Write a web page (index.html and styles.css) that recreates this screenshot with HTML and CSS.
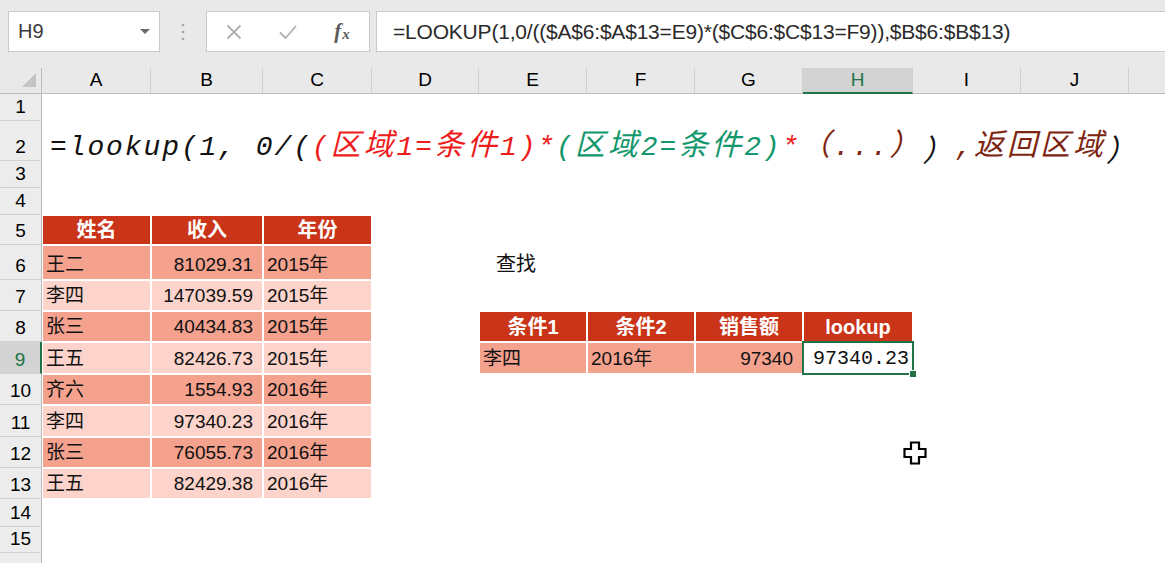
FILE: index.html
```html
<!DOCTYPE html>
<html lang="zh-CN">
<head>
<meta charset="utf-8">
<title>LOOKUP 多条件查找</title>
<link rel="stylesheet" href="styles.css">
</head>
<body>
<div class="toolbar">
  <div class="namebox">
    <span class="ref">H9</span>
    <svg class="dd" width="10" height="6" viewBox="0 0 10 6"><polygon points="0,0 10,0 5,5" fill="#6a6a6a"/></svg>
  </div>
  <div class="grip">
    <svg width="4" height="18" viewBox="0 0 4 18"><circle cx="2" cy="2" r="1.3" fill="#a8a8a8"/><circle cx="2" cy="9" r="1.3" fill="#a8a8a8"/><circle cx="2" cy="16" r="1.3" fill="#a8a8a8"/></svg>
  </div>
  <div class="fnbox">
    <span class="slot"><svg width="16" height="16" viewBox="0 0 16 16"><path d="M1.5 1.5 L14.5 14.5 M14.5 1.5 L1.5 14.5" stroke="#b0b0b0" stroke-width="1.8" fill="none"/></svg></span>
    <span class="slot"><svg width="18" height="14" viewBox="0 0 18 14"><path d="M1 7.5 L6.5 13 L17 1" stroke="#b0b0b0" stroke-width="1.8" fill="none"/></svg></span>
    <span class="slot fx"><i>f</i><span class="x">x</span></span>
  </div>
  <div class="fbar">=LOOKUP(1,0/(($A$6:$A$13=E9)*($C$6:$C$13=F9)),$B$6:$B$13)</div>
</div>

<div class="sheet">
  <div class="row hh">
    <div class="corner"><svg width="14" height="14" viewBox="0 0 14 14"><polygon points="14,0 14,14 0,14" fill="#c4c4c4"/></svg></div>
    <div class="ch">A</div><div class="ch">B</div><div class="ch">C</div><div class="ch">D</div><div class="ch">E</div><div class="ch">F</div><div class="ch">G</div><div class="ch sel">H</div><div class="ch">I</div><div class="ch">J</div><div class="ch last"></div>
  </div>
  <div class="row h27"><div class="rh">1</div></div>
  <div class="row h40"><div class="rh">2</div>
    <div class="formula"><span class="k">=lookup(1, 0/(</span><span class="r">(<span class="cj">区域</span>1=<span class="cj">条件</span>1)*</span><span class="g">(<span class="cj">区域</span>2=<span class="cj">条件</span>2)</span><span class="r">*</span><span class="b"><span class="cj">（</span>...<span class="cj">）</span></span><span class="k cj">）</span><span class="b">,<span class="cj">返回区域</span></span><span class="k cj">）</span></div>
  </div>
  <div class="row h27"><div class="rh">3</div></div>
  <div class="row h27"><div class="rh">4</div></div>
  <div class="row h30"><div class="rh">5</div>
    <div class="th">姓名</div><div class="th">收入</div><div class="th">年份</div>
  </div>
  <div class="row h35"><div class="rh">6</div>
    <div class="td dk">王二</div><div class="td dk num">81029.31</div><div class="td dk">2015年</div>
    <div class="note ce">查找</div>
  </div>
  <div class="row h31"><div class="rh">7</div>
    <div class="td lt">李四</div><div class="td lt num">147039.59</div><div class="td lt">2015年</div>
  </div>
  <div class="row h31"><div class="rh">8</div>
    <div class="td dk">张三</div><div class="td dk num">40434.83</div><div class="td dk">2015年</div>
    <div class="th ce">条件1</div><div class="th">条件2</div><div class="th">销售额</div><div class="th">lookup</div>
  </div>
  <div class="row h32"><div class="rh sel">9</div>
    <div class="td lt">王五</div><div class="td lt num">82426.73</div><div class="td lt">2015年</div>
    <div class="td dk ce">李四</div><div class="td dk">2016年</div><div class="td dk num">97340</div><div class="active">97340.23</div>
  </div>
  <div class="row h31"><div class="rh">10</div>
    <div class="td dk">齐六</div><div class="td dk num">1554.93</div><div class="td dk">2016年</div>
  </div>
  <div class="row h32"><div class="rh">11</div>
    <div class="td lt">李四</div><div class="td lt num">97340.23</div><div class="td lt">2016年</div>
  </div>
  <div class="row h31"><div class="rh">12</div>
    <div class="td dk">张三</div><div class="td dk num">76055.73</div><div class="td dk">2016年</div>
  </div>
  <div class="row h31"><div class="rh">13</div>
    <div class="td lt">王五</div><div class="td lt num">82429.38</div><div class="td lt">2016年</div>
  </div>
  <div class="row h28"><div class="rh">14</div></div>
  <div class="row h26"><div class="rh">15</div></div>
  <div class="row h26"><div class="rh"></div></div>
</div>

<svg class="cursor" width="24" height="24" viewBox="0 0 24 24"><path d="M8 1.5 H16 V8 H22.5 V16 H16 V22.5 H8 V16 H1.5 V8 H8 Z" fill="#fff" stroke="#000" stroke-width="2.2" stroke-linejoin="miter"/></svg>
</body>
</html>
```

FILE: styles.css
```css
html, body {
  margin: 0;
  padding: 0;
}
body {
  width: 1165px;
  height: 563px;
  overflow: hidden;
  background: #fff;
  font-family: "Liberation Sans", "Noto Sans CJK SC", sans-serif;
  color: #000;
  position: relative;
}

/* ---------- toolbar ---------- */
.toolbar {
  display: flex;
  align-items: flex-start;
  height: 68px;
  box-sizing: border-box;
  padding: 11px 0 0 8px;
  background: #e9e9e9;
}
.namebox {
  width: 152px;
  height: 41px;
  box-sizing: border-box;
  background: #fff;
  border: 1px solid #c9c9c9;
  display: flex;
  align-items: center;
  justify-content: space-between;
  padding: 0 9px 0 9px;
  font-size: 20px;
  color: #3c3c3c;
}
.namebox .dd {
  margin-top: 1px;
}
.grip {
  width: 46px;
  height: 41px;
  display: flex;
  align-items: center;
  justify-content: center;
}
.fnbox {
  width: 164px;
  height: 41px;
  box-sizing: border-box;
  background: #fff;
  border: 1px solid #c9c9c9;
  display: flex;
  align-items: center;
  padding-left: 0;
}
.slot {
  width: 54px;
  display: flex;
  justify-content: center;
  align-items: center;
}
.fx {
  font-family: "Liberation Serif", serif;
  font-style: italic;
  color: #5a5a5a;
  font-size: 21px;
  font-weight: bold;
}
.fx .x {
  font-size: 15px;
  margin-left: 1px;
  position: relative;
  top: 3px;
}
.fbar {
  flex: 1;
  margin-left: 6px;
  height: 41px;
  box-sizing: border-box;
  background: #fff;
  border: 1px solid #c9c9c9;
  border-right: none;
  display: flex;
  align-items: center;
  padding-left: 16px;
  font-size: 21px;
  letter-spacing: -0.2px;
  color: #2a2a2a;
  white-space: nowrap;
}

/* ---------- sheet grid ---------- */
.row {
  display: grid;
  grid-template-columns: 42px 109px 112px 109px 107px 108px 108px 108px 110px 108px 108px 1fr;
}
.hh { height: 26px; background: #e9e9e9; }
.h26 { height: 26px; }
.h27 { height: 27px; }
.h28 { height: 28px; }
.h30 { height: 30px; }
.h31 { height: 31px; }
.h32 { height: 32px; }
.h35 { height: 35px; }
.h40 { height: 40px; }

.corner {
  box-sizing: border-box;
  border-right: 1px solid #bcbcbc;
  border-bottom: 1px solid #bcbcbc;
  display: flex;
  align-items: flex-end;
  justify-content: flex-end;
  padding: 0 5px 6px 0;
}
.ch {
  box-sizing: border-box;
  border-bottom: 1px solid #bcbcbc;
  border-right: 1px solid #cfcfcf;
  display: flex;
  align-items: flex-end;
  justify-content: center;
  padding-bottom: 2px;
  font-size: 19px;
  line-height: 22px;
  color: #000;
}
.ch.last { border-right: none; }
.ch.sel {
  background: #d3d3d3;
  color: #217346;
  border-bottom: 2px solid #217346;
  padding-bottom: 1px;
}
.rh {
  box-sizing: border-box;
  background: #ececec;
  border-right: 1px solid #bcbcbc;
  border-bottom: 1px solid #d2d2d2;
  display: flex;
  align-items: flex-end;
  justify-content: center;
  padding-bottom: 3px;
  font-size: 19px;
  line-height: 20px;
  color: #000;
}
.rh.sel {
  background: #d3d3d3;
  color: #217346;
  border-right: 2px solid #217346;
}

/* ---------- row 2 formula ---------- */
.formula {
  grid-column: 2 / -1;
  display: flex;
  align-items: flex-end;
  padding-left: 8px;
  padding-bottom: 1px;
  font-family: "Liberation Mono", "Noto Sans CJK SC", monospace;
  font-style: italic;
  font-size: 28px;
  line-height: 24px;
  letter-spacing: 1.9px;
  white-space: nowrap;
}
.formula .cj {
  font-family: "Noto Sans CJK SC", sans-serif;
  font-size: 30px;
  letter-spacing: 3px;
}
.formula .k { color: #111; }
.formula .r { color: #ee1c1c; }
.formula .g { color: #13976c; }
.formula .b { color: #7e2511; }

/* ---------- tables ---------- */
.th, .td, .active, .note {
  box-sizing: border-box;
  display: flex;
  align-items: flex-end;
  font-size: 19px;
  line-height: 22px;
  white-space: nowrap;
}
.th {
  background: #ca3519;
  border: 1px solid #fff;
  color: #fff;
  font-weight: bold;
  font-size: 20px;
  justify-content: center;
  padding-bottom: 3px;
}
.td {
  border: 1px solid #fff;
  padding: 0 0 3px 3px;
  color: #111;
}
.td.num {
  justify-content: flex-end;
  padding-left: 0;
  padding-right: 9px;
}
.dk { background: #f4a18e; }
.lt { background: #fcd4cb; }
.ce { grid-column: 6; }
.note {
  padding: 0 0 5px 17px;
  font-size: 20px;
  color: #111;
}
.active {
  position: relative;
  justify-content: flex-end;
  padding: 0 4px 4px 0;
  font-family: "Liberation Mono", monospace;
  font-size: 20px;
  color: #111;
  background: #fff;
}
.active::after {
  content: "";
  position: absolute;
  left: -1px;
  top: -1px;
  right: -1px;
  bottom: -1px;
  border: 2px solid #217346;
}
.active::before {
  content: "";
  position: absolute;
  right: -4px;
  bottom: -4px;
  width: 6px;
  height: 6px;
  background: #217346;
  border: 1px solid #fff;
  z-index: 2;
}

.cursor {
  position: absolute;
  left: 903px;
  top: 441px;
}
```
